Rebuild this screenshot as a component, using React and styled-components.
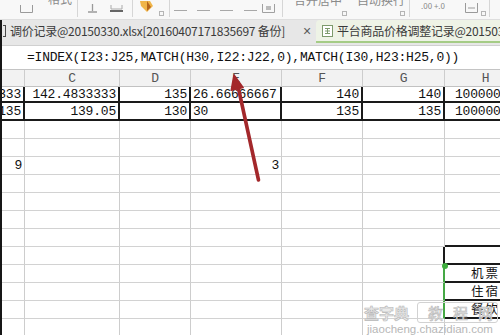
import React from "react";
import styled, { createGlobalStyle } from "styled-components";

const GlobalStyle = createGlobalStyle`
  html, body {
    margin: 0;
    padding: 0;
    background: #fff;
  }
  body {
    width: 500px;
    height: 335px;
    overflow: hidden;
    font-family: "Noto Sans CJK SC", "Liberation Sans", sans-serif;
  }
`;

const Screen = styled.div`
  position: relative;
  width: 500px;
  height: 335px;
  overflow: hidden;
  display: flex;
  flex-direction: column;
  background: #fff;
`;

/* ---------- ribbon (cut off at the top) ---------- */
const Ribbon = styled.div`
  flex: none;
  height: 19px;
  display: flex;
  align-items: flex-start;
  overflow: hidden;
  background: #f8f8f8;
  border-bottom: 1px solid #dedede;
`;

const Tool = styled.div`
  flex: none;
  margin-left: ${(p) => p.$gap || 0}px;
  margin-top: ${(p) => p.$lift || 0}px;
  width: ${(p) => p.$w}px;
  height: ${(p) => p.$h || 16}px;
  color: #8a8a8a;
  font-size: 12px;
  line-height: 16px;
  white-space: nowrap;
`;

const Sep = styled.div`
  flex: none;
  margin-left: ${(p) => p.$gap || 0}px;
  width: 1px;
  height: 17px;
  background: #d6d6d6;
`;

const Launcher = styled.div`
  flex: none;
  margin-left: ${(p) => p.$gap || 0}px;
  margin-top: 11px;
  width: 3px;
  height: 3px;
  border: 1px solid #b5b5b5;
`;

/* ---------- workbook tabs ---------- */
const Frame = styled.div`
  flex: 1;
  display: flex;
  flex-direction: column;
  border-left: 2px solid #161616;
  min-height: 0;
`;

const TabStrip = styled.div`
  flex: none;
  height: 25px;
  display: flex;
  align-items: stretch;
  background: #e7e7e7;
  overflow: hidden;
  white-space: nowrap;
`;

const Tab = styled.div`
  flex: none;
  display: flex;
  align-items: center;
  padding: 0 ${(p) => (p.$active ? 0 : 5)}px 0 ${(p) => (p.$active ? 6 : 1)}px;
  font-size: 12px;
  letter-spacing: -0.25px;
  color: #3a3a3a;
  background: ${(p) => (p.$active ? "#eef3e6" : "transparent")};
  border-bottom: 2px solid ${(p) => (p.$active ? "#a5cc86" : "transparent")};
  border-top-left-radius: ${(p) => (p.$active ? 4 : 0)}px;
  margin-bottom: 2px;
`;

const Nub = styled.span`
  width: 2px;
  height: 10px;
  margin-right: 4px;
  border: 1px solid #4a4a4a;
  border-left: none;
`;

const Close = styled.span`
  margin-left: 18px;
  font-family: "Liberation Sans", sans-serif;
  font-size: 14px;
  color: #5a5a5a;
`;

/* ---------- formula bar ---------- */
const FormulaBar = styled.div`
  flex: none;
  height: 25px;
  display: flex;
  align-items: center;
  padding-left: 25px;
  border-top: 1px solid #d0d0d0;
  border-bottom: 1px solid #c4c4c4;
  box-sizing: border-box;
  font-family: "Liberation Mono", "DejaVu Sans Mono", monospace;
  font-size: 13px;
  letter-spacing: -0.22px;
  color: #111;
  white-space: nowrap;
`;

/* ---------- sheet grid ---------- */
const Sheet = styled.div`
  flex: 1;
  overflow: hidden;
`;

const Row = styled.div`
  display: grid;
  grid-template-columns: 23px 95px 71px 91px 81px 82px 82px;
  height: ${(p) => p.$h}px;
  background: ${(p) => (p.$head ? "#f2f2f2" : "#fff")};
`;

const Cell = styled.div`
  box-sizing: border-box;
  display: flex;
  align-items: center;
  justify-content: ${(p) =>
    p.$align === "left" ? "flex-start" : p.$align === "center" ? "center" : "flex-end"};
  padding: 0 ${(p) => (p.$align === "left" ? 0 : 2)}px 0 ${(p) => p.$pl ?? 2}px;
  overflow: hidden;
  white-space: nowrap;
  line-height: 1;
  border-right: ${(p) => p.$right || "1px solid #cdcdcd"};
  border-bottom: ${(p) => p.$bottom || "1px solid #d2d2d2"};
  font-family: ${(p) =>
    p.$cjk
      ? '"Noto Sans CJK SC", sans-serif'
      : '"Liberation Mono", "DejaVu Sans Mono", monospace'};
  font-size: ${(p) => (p.$cjk ? 12.5 : 13)}px;
  letter-spacing: ${(p) => (p.$cjk ? 2 : -0.2)}px;
  color: ${(p) => (p.$head ? "#555" : "#111")};
`;

/* ---------- overlays ---------- */
const Overlay = styled.svg`
  position: absolute;
  left: 0;
  top: 0;
  pointer-events: none;
`;

const Handle = styled.div`
  position: absolute;
  left: 442px;
  top: 263px;
  width: 6px;
  height: 6px;
  border-radius: 50%;
  background: #3fae3f;
`;

const Watermark = styled.div`
  position: absolute;
  left: 364px;
  top: 302px;
  display: flex;
  flex-direction: column;
  align-items: flex-start;
  pointer-events: none;
`;

const MarkTop = styled.div`
  display: flex;
  align-items: center;
  gap: 8px;
  font-family: "Noto Sans CJK SC", sans-serif;
  font-size: 15px;
  line-height: 19px;
  font-weight: 700;
  color: #e8e8e8;
  -webkit-text-stroke: 0.6px #b8b8b8;
`;

const MarkBox = styled.span`
  display: flex;
  gap: 10px;
  padding: 0 4px 0 10px;
  border: 1px solid #d2d2d2;
  border-radius: 3px;
  font-weight: 400;
  font-size: 15px;
`;

const MarkUrl = styled.div`
  margin-left: 3px;
  font-family: "Liberation Sans", sans-serif;
  font-size: 11.5px;
  line-height: 13px;
  color: #b7b7b7;
`;

const BLACK = "2px solid #1a1a1a";
const GREEN = "2px solid #45a845";

const head = ["", "C", "D", "E", "F", "G", "H"];

// each row: height + cells {t: text, a: align, r: right border, b: bottom border}
const rows = [
  {
    h: 16,
    cells: [
      { t: "136.8333333", r: BLACK, b: BLACK },
      { t: "142.4833333", r: BLACK, b: BLACK },
      { t: "135", r: BLACK, b: BLACK },
      { t: "26.66666667", a: "left", r: BLACK, b: BLACK },
      { t: "140", r: BLACK, b: BLACK },
      { t: "140", r: BLACK, b: BLACK },
      { t: "100000", a: "left", pl: 10, b: BLACK },
    ],
  },
  {
    h: 18,
    cells: [
      { t: "135", r: BLACK, b: BLACK },
      { t: "139.05", r: BLACK, b: BLACK },
      { t: "130", r: BLACK, b: BLACK },
      { t: "30", a: "left", r: BLACK, b: BLACK },
      { t: "135", r: BLACK, b: BLACK },
      { t: "135", r: BLACK, b: BLACK },
      { t: "100000", a: "left", pl: 10, b: BLACK },
    ],
  },
  { h: 18, cells: [] },
  { h: 18, cells: [] },
  { h: 18, cells: [{ t: "9" }, {}, {}, { t: "3" }] },
  { h: 18, cells: [] },
  { h: 18, cells: [] },
  { h: 18, cells: [] },
  { h: 18, cells: [{}, {}, {}, {}, {}, {}, { b: BLACK }] },
  { h: 18, cells: [{}, {}, {}, {}, {}, { r: BLACK }, { b: BLACK }] },
  { h: 18, cells: [{}, {}, {}, {}, {}, { r: GREEN }, { t: "机票", a: "center", cjk: true, b: BLACK }] },
  { h: 18, cells: [{}, {}, {}, {}, {}, { r: GREEN }, { t: "住宿", a: "center", cjk: true, b: BLACK }] },
  { h: 18, cells: [{}, {}, {}, {}, {}, { r: GREEN }, { t: "餐饮", a: "center", cjk: true, b: BLACK }] },
  { h: 18, cells: [] },
];

const SheetIcon = () => (
  <svg width="11" height="12" viewBox="0 0 11 12">
    <rect x="0.5" y="0.5" width="10" height="11" fill="#fff" stroke="#7d9a6c" />
    <path d="M3 3.5h5M3 6h5M3 8.5h5M5.5 3v6" stroke="#7d9a6c" strokeWidth="1" />
  </svg>
);

const Dash = ({ gap }) => (
  <Tool $gap={gap} $w={13} $h={6}>
    <svg width="13" height="6"><path d="M0 3.5h13" stroke="#a8a8a8" /></svg>
  </Tool>
);

const Ribbonbar = () => (
  <Ribbon>
    <Tool $gap={0} $w={6} $lift={-12}>≡</Tool>
    <Tool $gap={14} $w={13} $h={8}>
      <svg width="13" height="8"><path d="M0.5 0v7.5h12V0" fill="none" stroke="#9a9a9a" /></svg>
    </Tool>
    <Tool $gap={15} $w={16} $lift={-9}>格式</Tool>
    <Sep $gap={13} />
    <Tool $gap={9} $w={11} $h={9}>
      <svg width="11" height="9"><path d="M5.5 0v7M1 8h9" stroke="#9a9a9a" strokeWidth="1.3" /></svg>
    </Tool>
    <Tool $gap={12} $w={13} $h={8}>
      <svg width="13" height="8"><path d="M1 0v4h11V0" fill="none" stroke="#aaa" /><rect x="0" y="5" width="13" height="2" fill="#666" /></svg>
    </Tool>
    <Sep $gap={9} />
    <Tool $gap={5} $w={17} $h={12}>
      <svg width="17" height="12"><path d="M2 0h10l3 5-6 6-6-6z" fill="#f0b54a" /><path d="M9 0l4 6-4 4" fill="#b5651d" /></svg>
    </Tool>
    <Launcher $gap={4} />
    <Sep $gap={5} />
    <Dash gap={4} />
    <Dash gap={10} />
    <Dash gap={10} />
    <Dash gap={11} />
    <Tool $gap={5} $w={13} $h={9}>
      <svg width="13" height="9"><path d="M0.5 0v8.5h12V0" fill="none" stroke="#a0a0a0" /><rect x="4" y="2" width="5" height="4" fill="#bbb" /></svg>
    </Tool>
    <Sep $gap={7} />
    <Tool $gap={11} $w={46} $lift={-8}>合并居中</Tool>
    <Launcher $gap={2} />
    <Tool $gap={10} $w={46} $lift={-8}>自动换行</Tool>
    <Launcher $gap={-3} />
    <Sep $gap={4} />
    <Tool $gap={11} $w={28} $lift={-2} style={{ fontSize: 8 }}>.00 +.0</Tool>
    <Tool $gap={16} $w={13} $h={10}>
      <svg width="13" height="10"><path d="M0.5 0v9.5h12V0M3 5h7" fill="none" stroke="#9a9a9a" /></svg>
    </Tool>
    <Launcher $gap={3} />
    <Sep $gap={3} />
  </Ribbon>
);

export default function App() {
  return (
    <Screen>
      <GlobalStyle />
      <Ribbonbar />
      <Frame>
        <TabStrip>
          <Tab>
            <Nub />
            调价记录@20150330.xlsx[20160407171835697 备份]<Close>×</Close>
          </Tab>
          <Tab $active>
            <SheetIcon />
            <span style={{ marginLeft: 4 }}>平台商品价格调整记录@20150330.xlsx</span>
          </Tab>
        </TabStrip>
        <FormulaBar>=INDEX(I23:J25,MATCH(H30,I22:J22,0),MATCH(I30,H23:H25,0))</FormulaBar>
        <Sheet>
          <Row $h={17} $head>
            {head.map((c, i) => (
              <Cell key={i} $head $align="center" $bottom="1px solid #c2c2c2">
                {c}
              </Cell>
            ))}
          </Row>
          {rows.map((row, ri) => (
            <Row key={ri} $h={row.h}>
              {head.map((_, ci) => {
                const c = row.cells[ci] || {};
                return (
                  <Cell
                    key={ci}
                    $align={c.a}
                    $pl={c.pl}
                    $right={c.r}
                    $bottom={c.b}
                    $cjk={c.cjk}
                  >
                    {c.t && <span>{c.t}</span>}
                  </Cell>
                );
              })}
            </Row>
          ))}
        </Sheet>
      </Frame>

      <Overlay width="500" height="335" viewBox="0 0 500 335">
        <path d="M258.5 180 L238.6 89" stroke="#a3282b" strokeWidth="3.6" strokeLinecap="round" />
        <path d="M234 75 L243.2 87.6 L231.2 90.3 Z" fill="#a3282b" stroke="#a3282b" strokeWidth="1.5" strokeLinejoin="round" />
      </Overlay>
      <Handle />
      <Watermark>
        <MarkTop>
          查字典
          <MarkBox>
            <span>教</span>
            <span>程</span>
            <span>网</span>
          </MarkBox>
        </MarkTop>
        <MarkUrl>jiaocheng.chazidian.com</MarkUrl>
      </Watermark>
    </Screen>
  );
}
